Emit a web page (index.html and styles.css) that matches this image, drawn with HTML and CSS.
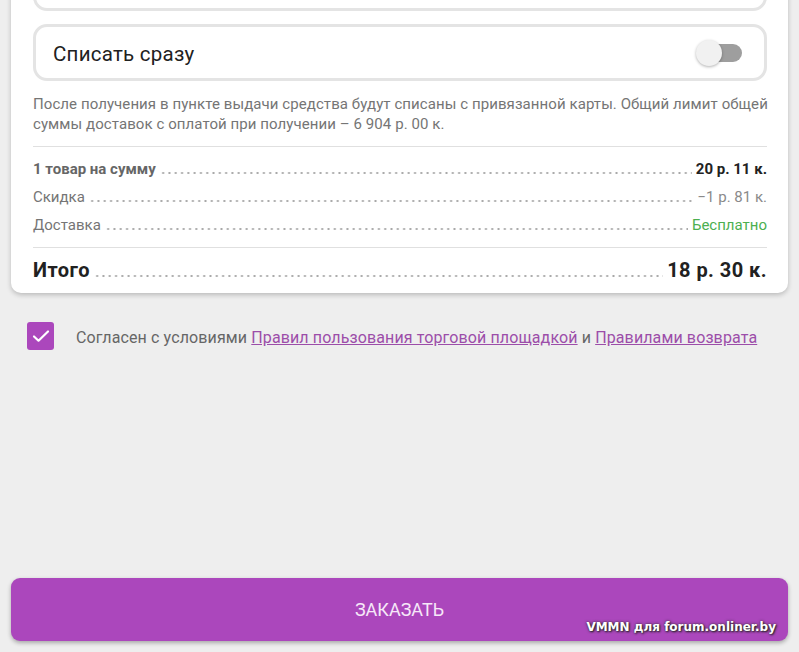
FILE: index.html
```html
<!DOCTYPE html>
<html lang="ru">
<head>
    <meta charset="UTF-8">
    <meta name="viewport" content="width=device-width, initial-scale=1.0">
    <title>Оформление заказа</title>
    <link rel="stylesheet" href="styles.css">
</head>
<body>
    <div class="page">
        <div class="card">
            <div class="option-box"></div>
            <div class="option-box">
                <span class="option-title">Списать сразу</span>
                <span class="switch"><span class="switch-thumb"></span></span>
            </div>
            <div class="note-wrap">
                <p class="note">После получения в пункте выдачи средства будут списаны с привязанной карты. Общий лимит общей суммы доставок с оплатой при получении – 6 904 р. 00 к.</p>
            </div>

            <div class="summary">
                <div class="row row-bold">
                    <span class="label">1 товар на сумму</span>
                    <span class="dots"></span>
                    <span class="value">20 р. 11 к.</span>
                </div>
                <div class="row">
                    <span class="label">Скидка</span>
                    <span class="dots"></span>
                    <span class="value">−1 р. 81 к.</span>
                </div>
                <div class="row">
                    <span class="label">Доставка</span>
                    <span class="dots"></span>
                    <span class="value value-free">Бесплатно</span>
                </div>
            </div>

            <div class="row row-total">
                <span class="label">Итого</span>
                <span class="dots"></span>
                <span class="value">18 р. 30 к.</span>
            </div>
        </div>

        <div class="agree">
            <span class="checkbox">
                <svg width="18" height="14" viewBox="0 0 18 14"><path d="M2 7.5l4.5 4.2L16 2.5" fill="none" stroke="#fff" stroke-width="2.2" stroke-linecap="round" stroke-linejoin="round"/></svg>
            </span>
            <span class="agree-text">Согласен с условиями <a href="#">Правил пользования торговой площадкой</a> и <a href="#">Правилами возврата</a></span>
        </div>

        <button class="order-btn">ЗАКАЗАТЬ</button>
    </div>
    <div class="watermark">VMMN для forum.onliner.by</div>
</body>
</html>
```

FILE: styles.css
```css
body {
    margin: 0;
    background-color: #eeeeee;
    font-family: Roboto, "Noto Sans", sans-serif;
    overflow: hidden;
}

.page {
    display: flex;
    flex-direction: column;
    height: 100vh;
    padding: 0 11px 11px;
    box-sizing: border-box;
}

.card {
    margin-top: -60px;
    padding: 14px 21px 9px 22px;
    background-color: white;
    border-radius: 10px;
    box-shadow: 0 2px 5px rgba(0, 0, 0, 0.22);
}

.option-box {
    display: flex;
    align-items: center;
    justify-content: space-between;
    height: 57px;
    box-sizing: border-box;
    padding: 0 22px 0 17px;
    border: 3px solid #e4e4e4;
    border-radius: 14px;
    margin-bottom: 13px;
}

.option-title {
    font-size: 20.5px;
    letter-spacing: 0.25px;
    color: #212121;
    padding-top: 2px;
}

.switch {
    position: relative;
    width: 34px;
    height: 18px;
    border-radius: 9px;
    background-color: #9e9e9e;
}

.switch-thumb {
    position: absolute;
    left: -12px;
    top: -4px;
    width: 26px;
    height: 26px;
    border-radius: 50%;
    background-color: #f1f1f1;
    box-shadow: 0 1px 3px rgba(0, 0, 0, 0.3);
}

.note-wrap {
    padding-bottom: 12px;
    border-bottom: 1px solid #e0e0e0;
}

.note {
    margin: 0 -8px 0 0;
    font-size: 15px;
    letter-spacing: 0.08px;
    line-height: 20px;
    color: #757575;
}

.summary {
    padding: 8px 0;
    border-bottom: 1px solid #e0e0e0;
}

.row {
    display: flex;
    align-items: baseline;
    line-height: 28px;
    font-size: 15px;
    color: #757575;
}

.row .value {
    color: #8a8a8a;
}

.row-bold .label {
    font-weight: bold;
    color: #666;
}

.row-bold .value {
    font-weight: bold;
    color: #222;
}

.value-free {
    color: #4caf50 !important;
}

.dots {
    flex: 1;
    height: 2px;
    margin: 0 4px;
    background-image: radial-gradient(circle, #a8a8a8 0.9px, transparent 1.2px);
    background-size: 6.3px 2px;
    background-repeat: repeat-x;
}

.row-total {
    padding-top: 8px;
    font-size: 20px;
    letter-spacing: 0.45px;
    font-weight: bold;
    color: #212121;
}

.row-total .value {
    color: #212121;
}

.agree {
    display: flex;
    align-items: center;
    gap: 22px;
    margin: 29px 0 0 16px;
}

.checkbox {
    display: flex;
    align-items: center;
    justify-content: center;
    width: 27px;
    height: 28px;
    border-radius: 3px;
    background-color: #ab47bc;
}

.agree-text {
    font-size: 16px;
    letter-spacing: 0.12px;
    color: #666;
    padding-top: 2px;
}

.agree-text a {
    color: #9c4da9;
}

.order-btn {
    margin-top: auto;
    height: 63px;
    border: none;
    border-radius: 9px;
    background-color: #ab47bc;
    color: #f6e8f8;
    font-family: Roboto, sans-serif;
    font-size: 18px;
    box-shadow: 0 2px 4px rgba(0, 0, 0, 0.3);
}

.watermark {
    position: absolute;
    right: 23px;
    top: 620px;
    font-family: "DejaVu Sans", Verdana, sans-serif;
    font-weight: bold;
    font-size: 12px;
    color: white;
    text-shadow: 1px 1px 2px #222, 0 0 3px #333;
}
```
